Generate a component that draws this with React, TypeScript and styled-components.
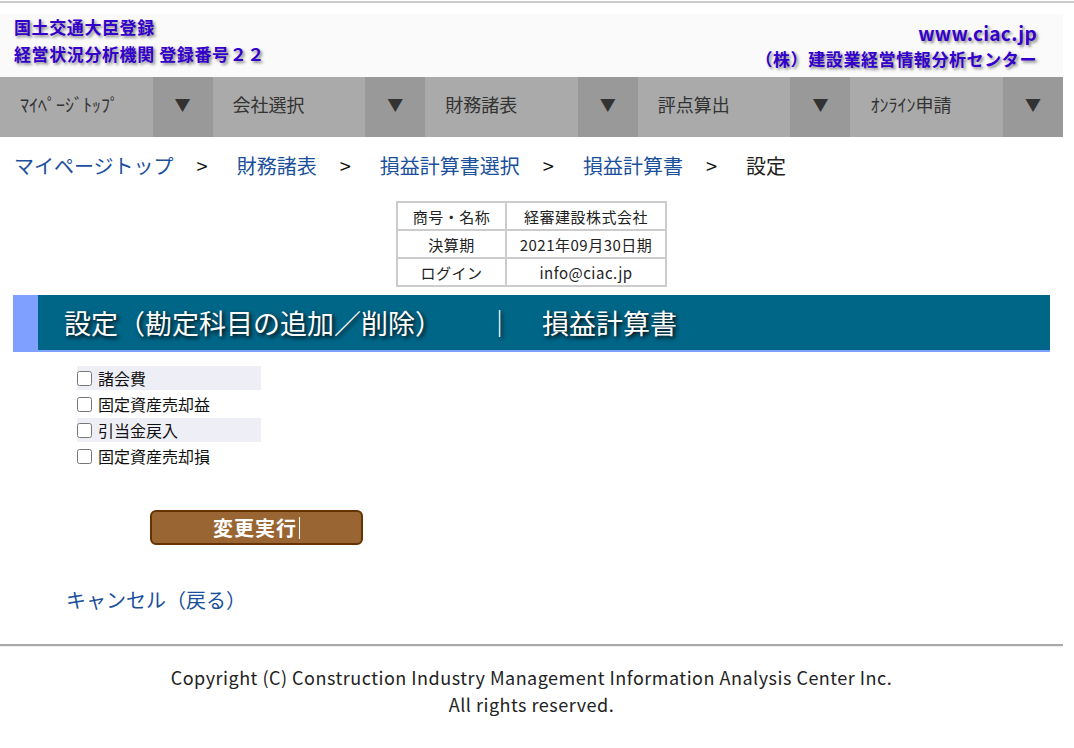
import React from "react";
import styled, { createGlobalStyle } from "styled-components";

const GlobalStyle = createGlobalStyle`
  body {
    margin: 0;
    background: #ffffff;
    font-family: "Noto Sans CJK JP", "Noto Sans", sans-serif;
    color: #222222;
  }
`;

const menus = ["ﾏｲﾍﾟｰｼﾞﾄｯﾌﾟ", "会社選択", "財務諸表", "評点算出", "ｵﾝﾗｲﾝ申請"];

const crumbs = [
  { text: "マイページトップ", link: true },
  { text: "財務諸表", link: true },
  { text: "損益計算書選択", link: true },
  { text: "損益計算書", link: true },
  { text: "設定", link: false },
];

const infoRows = [
  ["商号・名称", "経審建設株式会社"],
  ["決算期", "2021年09月30日期"],
  ["ログイン", "info@ciac.jp"],
];

const accounts = ["諸会費", "固定資産売却益", "引当金戻入", "固定資産売却損"];

const App = () => {
  return (
    <>
      <GlobalStyle />
      <TopRule />
      <Page>
        <Header>
          <HeaderLeft>
            <HeaderText>国土交通大臣登録</HeaderText>
            <HeaderText>経営状況分析機関 登録番号２２</HeaderText>
          </HeaderLeft>
          <HeaderRight>
            <HeaderText $large>www.ciac.jp</HeaderText>
            <HeaderText>（株）建設業経営情報分析センター</HeaderText>
          </HeaderRight>
        </Header>
        <Nav>
          {menus.map((m) => (
            <NavItem key={m}>
              <NavLabel>{m}</NavLabel>
              <NavArrow>▼</NavArrow>
            </NavItem>
          ))}
        </Nav>
        <Breadcrumb>
          {crumbs.map((c, i) => (
            <React.Fragment key={c.text}>
              {i > 0 && <Sep>&gt;</Sep>}
              <Crumb $link={c.link}>{c.text}</Crumb>
            </React.Fragment>
          ))}
        </Breadcrumb>
        <InfoTable>
          <tbody>
            {infoRows.map((r) => (
              <tr key={r[0]}>
                <InfoCell $w={103}>{r[0]}</InfoCell>
                <InfoCell $w={154}>{r[1]}</InfoCell>
              </tr>
            ))}
          </tbody>
        </InfoTable>
        <TitleBar>
          <TitleText>設定（勘定科目の追加／削除）</TitleText>
          <TitleDivider>｜</TitleDivider>
          <TitleText>損益計算書</TitleText>
        </TitleBar>
        <CheckList>
          {accounts.map((a, i) => (
            <CheckRow key={a} $odd={i % 2 === 0}>
              <Box type="checkbox" />
              <span>{a}</span>
            </CheckRow>
          ))}
        </CheckList>
        <SubmitButton>変更実行</SubmitButton>
        <CancelLink>キャンセル（戻る）</CancelLink>
        <FooterRule />
        <Footer>
          <div>Copyright (C) Construction Industry Management Information Analysis Center Inc.</div>
          <div>All rights reserved.</div>
        </Footer>
      </Page>
    </>
  );
};

const TopRule = styled.div`
  margin-top: 1px;
  height: 2px;
  background: #cccccc;
`;

const Page = styled.div`
  width: 1063px;
  padding-top: 11px;
`;

const Header = styled.header`
  display: flex;
  justify-content: space-between;
  height: 63px;
  background: #fafafa;
  padding: 1px 26px 0 14px;
  box-sizing: border-box;
`;

const HeaderLeft = styled.div`
  display: flex;
  flex-direction: column;
  gap: 3px;
`;

const HeaderRight = styled.div`
  display: flex;
  flex-direction: column;
  align-items: flex-end;
  padding-top: 6px;
  gap: 2px;
`;

const HeaderText = styled.div<{ $large?: boolean }>`
  font-size: ${(p) => (p.$large ? "19px" : "17px")};
  letter-spacing: ${(p) => (p.$large ? "0.3px" : "0.6px")};
  line-height: 24px;
  font-weight: bold;
  color: #3300cc;
  text-shadow: 2px 2px 3px #888888;
`;

const Nav = styled.nav`
  display: grid;
  grid-template-columns: repeat(5, 1fr);
  height: 60px;
`;

const NavItem = styled.div`
  display: flex;
`;

const NavLabel = styled.div`
  flex: 1;
  display: flex;
  align-items: center;
  padding: 0 0 7px 20px;
  background: #aaaaaa;
  color: #333333;
  font-size: 18px;
`;

const NavArrow = styled.div`
  width: 60px;
  display: flex;
  align-items: center;
  justify-content: center;
  padding-bottom: 7px;
  background: #999999;
  color: #333333;
  font-size: 16px;
`;

const Breadcrumb = styled.div`
  display: flex;
  align-items: center;
  padding: 14px 0 0 14px;
  height: 28px;
  font-size: 20px;
`;

const Crumb = styled.span<{ $link: boolean }>`
  color: ${(p) => (p.$link ? "#1a4f9c" : "#222222")};
`;

const Sep = styled.span`
  color: #111111;
  margin: 0 29px 0 23px;
`;

const InfoTable = styled.table`
  margin: 22px auto 0 auto;
  border-collapse: collapse;
  border: 2px solid #cccccc;
  font-size: 15px;
  letter-spacing: 0.5px;
`;

const InfoCell = styled.td<{ $w: number }>`
  width: ${(p) => p.$w}px;
  height: 26px;
  text-align: center;
  border: 2px solid #cccccc;
  padding: 0 2px;
`;

const TitleBar = styled.div`
  margin: 8px 13px 0 13px;
  height: 55px;
  background: #006688;
  border-left: 25px solid #80a0ff;
  border-bottom: 2px solid #80a0ff;
  display: flex;
  align-items: center;
  padding-left: 26px;
`;

const TitleText = styled.div`
  color: #ffffff;
  font-size: 27px;
  text-shadow: 2px 2px 4px #000000;
`;

const TitleDivider = styled(TitleText)`
  margin: 0 29px 0 44px;
`;

const CheckList = styled.div`
  margin: 14px 0 0 77px;
  display: flex;
  flex-direction: column;
  gap: 2px;
`;

const CheckRow = styled.label<{ $odd: boolean }>`
  display: flex;
  align-items: center;
  width: 184px;
  height: 24px;
  font-size: 16px;
  color: #111111;
  background: ${(p) => (p.$odd ? "#eeeef6" : "transparent")};
`;

const Box = styled.input`
  margin: 0 6px 0 0;
  width: 15px;
  height: 15px;
`;

const SubmitButton = styled.button`
  display: flex;
  align-items: center;
  justify-content: center;
  margin: 42px 0 0 150px;
  width: 213px;
  height: 35px;
  background: #996633;
  border: 2px solid #663300;
  border-radius: 6px;
  color: #ffffff;
  font-family: "Noto Sans CJK JP", sans-serif;
  font-size: 20px;
  font-weight: bold;
  letter-spacing: 1px;

  &::after {
    content: "";
    width: 1px;
    height: 22px;
    margin-left: 2px;
    background: #ffffff;
  }
`;

const CancelLink = styled.div`
  margin: 40px 0 0 66px;
  font-size: 20px;
  color: #1a4f9c;
`;

const FooterRule = styled.hr`
  margin: 30px 0 0 0;
  border: none;
  border-top: 2px solid #aaaaaa;
  border-bottom: 1px solid #eeeeee;
`;

const Footer = styled.footer`
  margin-top: 17px;
  text-align: center;
  font-size: 18px;
  letter-spacing: 0.5px;
  line-height: 27px;
  color: #222222;
`;

export default App;
